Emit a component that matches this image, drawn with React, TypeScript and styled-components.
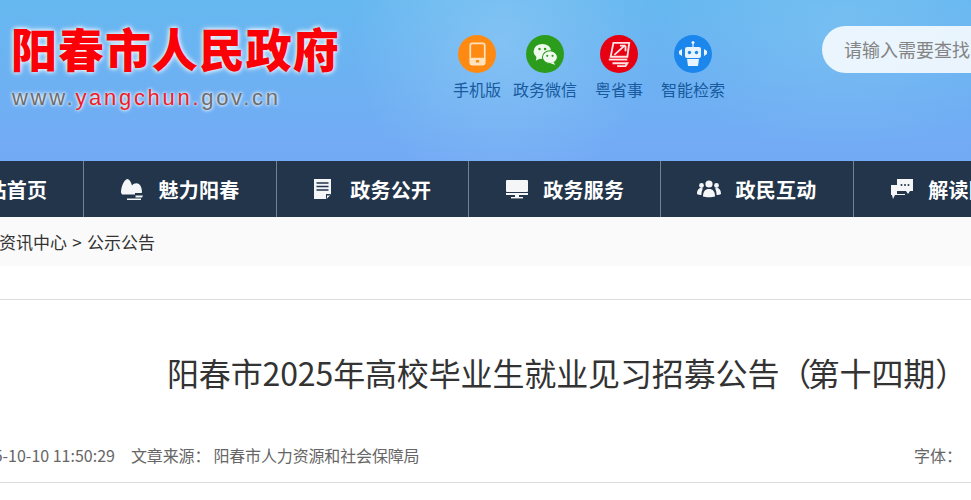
import styled, { createGlobalStyle } from 'styled-components';

const GlobalStyle = createGlobalStyle`
  html, body {
    margin: 0;
    padding: 0;
    background: #fff;
    overflow: hidden;
  }
  body {
    font-family: "Noto Sans CJK SC", "Liberation Sans", sans-serif;
  }
`;

const Viewport = styled.div`
  width: 971px;
  height: 500px;
  overflow: hidden;
`;

const Page = styled.div`
  width: 1400px;
  margin-left: -108px;
`;

const Header = styled.header`
  height: 161px;
  display: flex;
  align-items: flex-start;
  padding-left: 119px;
  box-sizing: border-box;
  background:
    radial-gradient(ellipse 150px 150px at 610px 40px, rgba(150, 205, 245, 0.55), transparent),
    radial-gradient(ellipse 180px 120px at 950px 30px, rgba(135, 200, 243, 0.45), transparent),
    linear-gradient(180deg, #66b8f0 0%, #74aaf5 100%);
`;

const Logo = styled.div`
  width: 335px;
  flex: none;
  padding-top: 17px;
`;

const LogoTitle = styled.div`
  font-size: 46px;
  line-height: 60px;
  font-weight: 900;
  color: #fb0006;
  letter-spacing: 0.95px;
  white-space: nowrap;
  text-shadow: 0 0 4px #fff, 0 0 6px rgba(255, 255, 255, 0.8);
`;

const LogoUrl = styled.div`
  margin: 6px 0 0 1px;
  font-family: "Liberation Sans", sans-serif;
  font-size: 22px;
  line-height: 30px;
  letter-spacing: 2.7px;
  color: #6d6d6d;
  white-space: nowrap;
  text-shadow: 0 0 3px #fff, 0 0 4px #fff;

  span {
    color: #ef1c25;
  }
`;

const QuickLinks = styled.nav`
  display: flex;
  padding-top: 35px;
  margin-left: 107px;
  flex: none;
`;

const QuickLink = styled.a<{ $gap: number }>`
  display: flex;
  flex-direction: column;
  align-items: center;
  margin-left: ${p => p.$gap}px;
  font-size: 16px;
  line-height: 24px;
  color: #175a9e;
  white-space: nowrap;
`;

const QuickIcon = styled.span<{ $color: string }>`
  width: 38px;
  height: 38px;
  border-radius: 50%;
  background: ${p => p.$color};
  display: flex;
  align-items: center;
  justify-content: center;
  margin-bottom: 4px;
`;

const SearchBox = styled.div`
  margin-top: 26px;
  margin-left: 97px;
  width: 340px;
  height: 47px;
  flex: none;
  box-sizing: border-box;
  padding-left: 22px;
  border-radius: 24px;
  background: rgba(255, 255, 255, 0.85);
  font-size: 18px;
  line-height: 47px;
  color: #848484;
  white-space: nowrap;
`;

const MainNav = styled.nav`
  height: 56px;
  background: #23354a;
  display: flex;
`;

const NavItem = styled.a<{ $last?: boolean; $gap?: number }>`
  width: 192.33px;
  flex: none;
  box-sizing: border-box;
  display: flex;
  align-items: center;
  justify-content: center;
  gap: ${p => p.$gap ?? 14}px;
  border-right: ${p => (p.$last ? 'none' : '1px solid #75818f')};
  color: #fff;
  font-size: 20px;
  font-weight: 700;
  letter-spacing: 0.25px;
  white-space: nowrap;
`;

const Breadcrumb = styled.div`
  height: 49px;
  background: #fafafa;
  padding-left: 107px;
  font-size: 17px;
  line-height: 49px;
  word-spacing: 1.5px;
  color: #333;
  white-space: nowrap;
`;

const Article = styled.article`
  margin-top: 33px;
  width: 1079px;
  border-top: 1px solid #ddd;
`;

const ArticleTitle = styled.h1`
  margin: 0;
  padding: 47px 0 0 275px;
  font-size: 32px;
  line-height: 50px;
  font-weight: 400;
  letter-spacing: -0.13px;
  color: #333;
  white-space: nowrap;

  span {
    letter-spacing: -3.6px;
  }
`;

const Meta = styled.div`
  margin-top: 47px;
  height: 38px;
  display: flex;
  align-items: flex-start;
  border-bottom: 1px solid #ddd;
  font-size: 16px;
  line-height: 23px;
  color: #666;
  white-space: nowrap;
`;

const MetaDate = styled.span`
  margin-left: 75px;
`;

const MetaSource = styled.span`
  margin-left: 16px;
  letter-spacing: -0.1px;
`;

const MetaOrg = styled.span`
  margin-left: 3px;
  letter-spacing: -0.15px;
`;

const FontTool = styled.span`
  margin-left: auto;
  margin-right: 9px;
`;

const PhoneIcon = () => (
  <svg width="17" height="26" viewBox="0 0 20 28" fill="none">
    <rect x="1.5" y="1.5" width="17" height="25" rx="2.5" stroke="#ffe3bd" strokeWidth="2" />
    <rect x="1.5" y="18.5" width="17" height="8" rx="2" fill="#ffe3bd" />
    <rect x="8" y="21" width="4" height="3" rx="1" fill="#ff8a12" />
  </svg>
);

const WechatIcon = () => (
  <svg width="25" height="23" viewBox="0 0 28 26" fill="#f0f9ee">
    <ellipse cx="10.5" cy="9.5" rx="10" ry="8.5" />
    <path d="M4 15l-1 5 6-3z" />
    <ellipse cx="19" cy="16" rx="8.5" ry="7.2" stroke="#2c9c1c" strokeWidth="1.2" />
    <path d="M23 21.5l2 3.5-6-2.5z" />
    <circle cx="7.2" cy="6.8" r="1.4" fill="#2c9c1c" />
    <circle cx="13.6" cy="6.8" r="1.4" fill="#2c9c1c" />
    <circle cx="16" cy="14.5" r="1.2" fill="#2c9c1c" />
    <circle cx="22" cy="14.5" r="1.2" fill="#2c9c1c" />
  </svg>
);

const YueIcon = () => (
  <svg width="24" height="26" viewBox="0 0 24 28" fill="none" stroke="#ffe3e5" strokeWidth="2">
    <path d="M6 2h17l-2 15H3z" />
    <path d="M7 15L18 5M19 5h-6M19 5v6" />
    <path d="M1 20h20" />
    <path d="M5 24h16l-2 3H10" />
  </svg>
);

const RobotIcon = () => (
  <svg width="28" height="28" viewBox="0 0 28 28" fill="#eaf4ff">
    <circle cx="14" cy="2.5" r="1.5" />
    <rect x="13.4" y="3" width="1.2" height="4" />
    <rect x="6" y="7" width="16" height="11" rx="2" />
    <path d="M8 19h12l-1 7H9z" />
    <path d="M0 11l3-2v7l-3-2zM28 11l-3-2v7l3-2z" />
    <circle cx="10.5" cy="12.5" r="1.7" fill="#1b86ec" />
    <circle cx="17.5" cy="12.5" r="1.7" fill="#1b86ec" />
  </svg>
);

const HomeIcon = () => (
  <svg width="24" height="22" viewBox="0 0 24 22" fill="#f4f6f8">
    <path d="M12 1L1 11h3v10h6v-6h4v6h6V11h3z" />
  </svg>
);

const MountainIcon = () => (
  <svg width="24" height="24" viewBox="0 0 24 24" fill="#f4f6f8">
    <path d="M1 15.5C1 10 4 3 7 2c2.5 0 4 3 5 6.5 1.5-2 4.500-3 7-1.500 2 1.500 3 5 3 8.500l-.5.5H15v1.500H2z" />
    <path d="M15.5 18.500H23l-1 2h-6.500zM7 21.500h14V23H7z" />
  </svg>
);

const DocIcon = () => (
  <svg width="20" height="22" viewBox="0 0 20 22">
    <path d="M1 1h17v15l-5 5H1z" fill="#f4f6f8" />
    <path d="M3.5 5h12M3.5 8.5h12M3.5 12h12" stroke="#23354a" strokeWidth="1.3" />
    <path d="M18 16h-5v5z" fill="#23354a" />
    <path d="M17 17.4h-3v3z" fill="#f4f6f8" />
  </svg>
);

const MonitorIcon = () => (
  <svg width="24" height="20" viewBox="0 0 24 20" fill="#f4f6f8">
    <rect x="1" y="1" width="22" height="12" rx="1" />
    <rect x="1" y="14" width="22" height="2" />
    <rect x="10" y="16" width="4" height="2" />
    <rect x="6" y="18" width="12" height="1.4" />
  </svg>
);

const PeopleIcon = () => (
  <svg width="24" height="18" viewBox="0 0 24 18" fill="#f4f6f8">
    <circle cx="12" cy="4" r="3.6" />
    <circle cx="4.5" cy="5.5" r="2.4" />
    <circle cx="19.5" cy="5.5" r="2.4" />
    <path d="M6 16.5c0-5 2-7.5 6-7.5s6 2.5 6 7.5c-3 1-9 1-12 0z" />
    <path d="M0 14c0-3.5 1.5-6 4-6 .8 0 1.5.2 2 .5C5 10 4.5 12 4.4 15 3 15 1 14.8 0 14zM24 14c0-3.5-1.5-6-4-6-.8 0-1.5.2-2 .5 1 1.5 1.500 3.5 1.600 6.500 1.400 0 3.400-.2 4.400-1z" />
  </svg>
);

const ChatIcon = () => (
  <svg width="24" height="22" viewBox="0 0 24 22">
    <path d="M1 7h6v9h8v1H5l-2 4-1-4H1z" fill="#f4f6f8" />
    <path d="M7 1h16v12h-3l-2 3-2-3H7z" fill="#f4f6f8" />
    <circle cx="11.5" cy="7" r="1" fill="#23354a" />
    <circle cx="15" cy="7" r="1" fill="#23354a" />
    <circle cx="18.5" cy="7" r="1" fill="#23354a" />
  </svg>
);

const quickLinks = [
  { label: '手机版', gap: 0, color: '#ff8a12', icon: <PhoneIcon /> },
  { label: '政务微信', gap: 12, color: '#2c9c1c', icon: <WechatIcon /> },
  { label: '粤省事', gap: 18, color: '#e60012', icon: <YueIcon /> },
  { label: '智能检索', gap: 18, color: '#1b86ec', icon: <RobotIcon /> },
];

const navItems = [
  { label: '网站首页', icon: <HomeIcon /> },
  { label: '魅力阳春', icon: <MountainIcon /> },
  { label: '政务公开', icon: <DocIcon />, gap: 17 },
  { label: '政务服务', icon: <MonitorIcon /> },
  { label: '政民互动', icon: <PeopleIcon /> },
  { label: '解读回应', icon: <ChatIcon /> },
];

export default function App() {
  return (
    <Viewport>
      <GlobalStyle />
      <Page>
        <Header>
          <Logo>
            <LogoTitle>阳春市人民政府</LogoTitle>
            <LogoUrl>
              www.<span>yangchun.</span>gov.cn
            </LogoUrl>
          </Logo>
          <QuickLinks>
            {quickLinks.map(link => (
              <QuickLink key={link.label} $gap={link.gap}>
                <QuickIcon $color={link.color}>{link.icon}</QuickIcon>
                {link.label}
              </QuickLink>
            ))}
          </QuickLinks>
          <SearchBox>请输入需要查找的内容</SearchBox>
        </Header>
        <MainNav>
          {navItems.map((item, i) => (
            <NavItem key={item.label} $last={i === navItems.length - 1} $gap={item.gap}>
              {item.icon}
              {item.label}
            </NavItem>
          ))}
        </MainNav>
        <Breadcrumb>资讯中心 &gt; 公示公告</Breadcrumb>
        <Article>
          <ArticleTitle>
            阳春市2025年高校毕业生就业见习招募公告<span>（</span>第十四期）
          </ArticleTitle>
          <Meta>
            <MetaDate>2025-10-10 11:50:29</MetaDate>
            <MetaSource>文章来源：</MetaSource>
            <MetaOrg>阳春市人力资源和社会保障局</MetaOrg>
            <FontTool>字体：</FontTool>
          </Meta>
        </Article>
      </Page>
    </Viewport>
  );
}
